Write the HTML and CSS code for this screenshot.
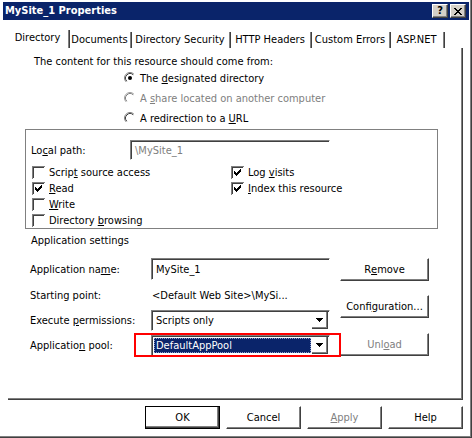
FILE: index.html
```html
<!DOCTYPE html>
<html>
<head>
<meta charset="utf-8">
<title>MySite_1 Properties</title>
<link rel="stylesheet" href="styles.css">
</head>
<body>
<div class="dialog">
  <div class="titlebar">
    <span class="title">MySite_1 Properties</span>
    <div class="capbtns">
      <span class="capbtn help">?</span>
      <span class="capbtn close">
        <svg width="8" height="7" viewBox="0 0 8 7" shape-rendering="crispEdges"><path d="M0 0h2v1H0zM6 0h2v1H6zM1 1h2v1H1zM5 1h2v1H5zM2 2h4v1H2zM3 3h2v1H3zM2 4h4v1H2zM1 5h2v1H1zM5 5h2v1H5zM0 6h2v1H0zM6 6h2v1H6z" fill="#000"/></svg>
      </span>
    </div>
  </div>

  <div class="tabs">
    <div class="tab sel t-dir">Directory</div>
    <div class="tab t-doc">Documents</div>
    <div class="tab t-sec">Directory Security</div>
    <div class="tab t-http">HTTP Headers</div>
    <div class="tab t-err">Custom Errors</div>
    <div class="tab t-asp">ASP.NET</div>
  </div>

  <div class="panel">
    <div class="intro">The content for this resource should come from:</div>

    <div class="radios">
      <div class="radio-row">
        <svg class="radio" width="12" height="12" viewBox="0 0 12 12"><circle cx="6" cy="6" r="5.5" fill="#fff"/><path d="M2.11 9.89A5.5 5.5 0 0 1 9.89 2.11" fill="none" stroke="#808080"/><path d="M2.82 9.18A4.5 4.5 0 0 1 9.18 2.82" fill="none" stroke="#404040"/><circle cx="6" cy="6" r="2" fill="#000"/></svg>
        <span>The <u>d</u>esignated directory</span>
      </div>
      <div class="radio-row disabled">
        <svg class="radio" width="12" height="12" viewBox="0 0 12 12"><circle cx="6" cy="6" r="5.5" fill="#fff"/><path d="M2.11 9.89A5.5 5.5 0 0 1 9.89 2.11" fill="none" stroke="#a0a0a0"/><path d="M2.82 9.18A4.5 4.5 0 0 1 9.18 2.82" fill="none" stroke="#808080"/></svg>
        <span>A <u>s</u>hare located on another computer</span>
      </div>
      <div class="radio-row">
        <svg class="radio" width="12" height="12" viewBox="0 0 12 12"><circle cx="6" cy="6" r="5.5" fill="#fff"/><path d="M2.11 9.89A5.5 5.5 0 0 1 9.89 2.11" fill="none" stroke="#808080"/><path d="M2.82 9.18A4.5 4.5 0 0 1 9.18 2.82" fill="none" stroke="#404040"/></svg>
        <span>A redirection to a <u>U</u>RL</span>
      </div>
    </div>

    <div class="group">
      <div class="path-row">
        <span class="path-label">Lo<u>c</u>al path:</span>
        <div class="edit edit-path disabled-text">\MySite_1</div>
      </div>
      <div class="checks">
        <div class="check-row">
          <svg class="cb" width="13" height="13" viewBox="0 0 13 13" shape-rendering="crispEdges"><rect width="13" height="13" fill="#fff"/><path d="M0 0h13v1H0zM0 0h1v13H0z" fill="#808080"/><path d="M1 1h11v1H1zM1 1h1v11H1z" fill="#404040"/></svg>
          <span>Scrip<u>t</u> source access</span>
        </div>
        <div class="check-row">
          <svg class="cb" width="13" height="13" viewBox="0 0 13 13" shape-rendering="crispEdges"><rect width="13" height="13" fill="#fff"/><path d="M0 0h13v1H0zM0 0h1v13H0z" fill="#808080"/><path d="M1 1h11v1H1zM1 1h1v11H1z" fill="#404040"/><path d="M3 5h1v3H3zM4 6h1v3H4zM5 7h1v3H5zM6 6h1v3H6zM7 5h1v3H7zM8 4h1v3H8zM9 3h1v3H9z" fill="#000"/></svg>
          <span>Log <u>v</u>isits</span>
        </div>
        <div class="check-row">
          <svg class="cb" width="13" height="13" viewBox="0 0 13 13" shape-rendering="crispEdges"><rect width="13" height="13" fill="#fff"/><path d="M0 0h13v1H0zM0 0h1v13H0z" fill="#808080"/><path d="M1 1h11v1H1zM1 1h1v11H1z" fill="#404040"/><path d="M3 5h1v3H3zM4 6h1v3H4zM5 7h1v3H5zM6 6h1v3H6zM7 5h1v3H7zM8 4h1v3H8zM9 3h1v3H9z" fill="#000"/></svg>
          <span><u>R</u>ead</span>
        </div>
        <div class="check-row">
          <svg class="cb" width="13" height="13" viewBox="0 0 13 13" shape-rendering="crispEdges"><rect width="13" height="13" fill="#fff"/><path d="M0 0h13v1H0zM0 0h1v13H0z" fill="#808080"/><path d="M1 1h11v1H1zM1 1h1v11H1z" fill="#404040"/><path d="M3 5h1v3H3zM4 6h1v3H4zM5 7h1v3H5zM6 6h1v3H6zM7 5h1v3H7zM8 4h1v3H8zM9 3h1v3H9z" fill="#000"/></svg>
          <span><u>I</u>ndex this resource</span>
        </div>
        <div class="check-row">
          <svg class="cb" width="13" height="13" viewBox="0 0 13 13" shape-rendering="crispEdges"><rect width="13" height="13" fill="#fff"/><path d="M0 0h13v1H0zM0 0h1v13H0z" fill="#808080"/><path d="M1 1h11v1H1zM1 1h1v11H1z" fill="#404040"/></svg>
          <span><u>W</u>rite</span>
        </div>
        <div class="check-row empty"></div>
        <div class="check-row">
          <svg class="cb" width="13" height="13" viewBox="0 0 13 13" shape-rendering="crispEdges"><rect width="13" height="13" fill="#fff"/><path d="M0 0h13v1H0zM0 0h1v13H0z" fill="#808080"/><path d="M1 1h11v1H1zM1 1h1v11H1z" fill="#404040"/></svg>
          <span>Directory <u>b</u>rowsing</span>
        </div>
      </div>
    </div>

    <div class="section-title">Application settings</div>

    <div class="settings">
      <div class="settings-grid">
        <span class="lbl">Application na<u>m</u>e:</span>
        <div class="edit edit-name">MySite_1</div>

        <span class="lbl">Starting point:</span>
        <span class="value">&lt;Default Web Site&gt;\MySi...</span>

        <span class="lbl">Execute <u>p</u>ermissions:</span>
        <div class="combo">
          <span class="combo-text">Scripts only</span>
          <span class="combo-btn"><svg width="7" height="4" viewBox="0 0 7 4" shape-rendering="crispEdges"><path d="M0 0h7v1H0zM1 1h5v1H1zM2 2h3v1H2zM3 3h1v1H3z" fill="#000"/></svg></span>
        </div>

        <span class="lbl lbl-pool">Applicatio<u>n</u> pool:</span>
        <div class="combo combo-pool">
          <span class="combo-text selected">DefaultAppPool</span>
          <span class="combo-btn"><svg width="7" height="4" viewBox="0 0 7 4" shape-rendering="crispEdges"><path d="M0 0h7v1H0zM1 1h5v1H1zM2 2h3v1H2zM3 3h1v1H3z" fill="#000"/></svg></span>
          <span class="highlight-box"></span>
        </div>
      </div>
      <div class="settings-buttons">
        <div class="btn wide">R<u>e</u>move</div>
        <div class="btn wide btn-config">Confi<u>g</u>uration...</div>
        <div class="btn wide btn-unload disabled-text">Unl<u>o</u>ad</div>
      </div>
    </div>
  </div>

  <div class="footer">
    <div class="btn default">OK</div>
    <div class="btn">Cancel</div>
    <div class="btn disabled-text"><u>A</u>pply</div>
    <div class="btn">Help</div>
  </div>
</div>
</body>
</html>
```

FILE: styles.css
```css
* {
  box-sizing: border-box;
}

html,
body {
  margin: 0;
  padding: 0;
  background: #fff;
}

body {
  font-family: "DejaVu Sans Condensed", "DejaVu Sans", sans-serif;
  font-stretch: condensed;
  font-size: 11px;
  color: #000;
}

u {
  text-decoration: underline;
  text-underline-offset: 1px;
}

.dialog {
  width: 472px;
  height: 438px;
  padding-top: 2px;
  background: #fff;
  box-shadow: inset -1px -1px #404040, inset -2px -2px #808080;
  overflow: hidden;
}

/* Title bar */
.titlebar {
  height: 18px;
  margin: 0 3px;
  background: #0a246a;
  display: flex;
  align-items: flex-start;
  justify-content: space-between;
}

.title {
  color: #fff;
  font-weight: bold;
  line-height: 18px;
  padding-left: 2px;
}

.capbtns {
  display: flex;
  gap: 2px;
  margin-top: 2px;
  margin-right: 3px;
}

.capbtn {
  width: 16px;
  height: 14px;
  background: #d4d0c8;
  border: 1px solid;
  border-color: #fff #404040 #404040 #fff;
  box-shadow: inset -1px -1px #808080;
  display: flex;
  align-items: center;
  justify-content: center;
  font-weight: bold;
  font-size: 11px;
  line-height: 12px;
}

/* Tabs */
.tabs {
  display: flex;
  align-items: flex-end;
  height: 18px;
  margin: 10px 0 0 8px;
}

.tab {
  height: 16px;
  line-height: 16px;
  text-align: center;
  border-right: 1px solid #404040;
  box-shadow: inset -1px 0 #808080;
  padding-right: 2px;
  white-space: nowrap;
}

.tab.sel {
  height: 18px;
}

.t-dir { width: 62px; }
.t-doc { width: 62px; }
.t-sec { width: 99px; }
.t-http { width: 81px; }
.t-err { width: 79px; }
.t-asp { width: 54px; }

/* Panel */
.panel {
  margin-left: 8px;
  width: 455px;
  height: 352px;
  border-right: 1px solid #404040;
  border-bottom: 1px solid #404040;
  box-shadow: inset -1px -1px #808080;
  padding-top: 7px;
}

.intro {
  margin-left: 26px;
  line-height: 13px;
}

.radios {
  margin-left: 116px;
}

.radio-row {
  height: 20px;
  display: flex;
  align-items: center;
  gap: 4px;
  white-space: nowrap;
}

.radio {
  flex: none;
}

.disabled,
.disabled-text {
  color: #808080;
}

/* Group box */
.group {
  margin: 1px 0 0 17px;
  width: 413px;
  height: 100px;
  border: 1px solid #808080;
  box-shadow: 1px 1px #fff;
  padding-top: 10px;
}

.path-row {
  display: flex;
  align-items: center;
  height: 20px;
  padding-left: 5px;
}

.path-label {
  width: 99px;
}

.edit {
  border: 1px solid;
  border-color: #808080 #fff #fff #808080;
  box-shadow: inset 1px 1px #404040;
  padding-left: 4px;
  display: flex;
  align-items: center;
  white-space: nowrap;
}

.edit-path {
  width: 200px;
  height: 20px;
}

.checks {
  margin-top: 4px;
  padding-left: 6px;
  display: grid;
  grid-template-columns: 199px auto;
  grid-auto-rows: 16px;
}

.check-row {
  display: flex;
  align-items: center;
  gap: 4px;
  white-space: nowrap;
}

.cb {
  flex: none;
}

.section-title {
  margin: 5px 0 0 23px;
  line-height: 14px;
}

/* Application settings */
.settings {
  margin: 10px 0 0 22px;
  display: flex;
  align-items: flex-start;
}

.settings-grid {
  display: grid;
  grid-template-columns: 121px 179px;
  grid-template-rows: 22px 30px 21px 21px;
  row-gap: 0;
  align-items: center;
}

.lbl {
  white-space: nowrap;
}

.lbl-pool,
.combo-pool {
  margin-top: 8px;
}

.edit-name {
  height: 22px;
  width: 179px;
}

.value {
  padding-left: 1px;
  white-space: nowrap;
}

.combo {
  position: relative;
  height: 21px;
  width: 179px;
  border: 1px solid;
  border-color: #808080 #fff #fff #808080;
  box-shadow: inset 1px 1px #404040;
  display: flex;
  align-items: stretch;
  padding: 1px 1px 1px 1px;
  padding-left: 2px;
}

.combo-text {
  flex: 1;
  display: flex;
  align-items: center;
  padding-left: 2px;
  white-space: nowrap;
}

.combo-text.selected {
  background: #0a246a;
  color: #fff;
  margin: 1px 1px 1px 0;
  outline: 1px dotted #8f9fd0;
  outline-offset: -1px;
}

.combo-btn {
  width: 16px;
  flex: none;
  border-right: 1px solid #404040;
  border-bottom: 1px solid #404040;
  box-shadow: inset -1px -1px #808080;
  display: flex;
  align-items: center;
  justify-content: center;
  padding-right: 1px;
}

.highlight-box {
  position: absolute;
  left: -18px;
  top: -3px;
  width: 207px;
  height: 24px;
  border: 2px solid #f00;
  pointer-events: none;
}

.settings-buttons {
  margin-left: 10px;
  display: flex;
  flex-direction: column;
}

.btn {
  width: 75px;
  height: 23px;
  background: #fff;
  border: 1px solid;
  border-color: #fff #404040 #404040 #fff;
  box-shadow: inset -1px -1px #808080;
  display: flex;
  align-items: center;
  justify-content: center;
  white-space: nowrap;
}

.btn.wide {
  width: 89px;
}

.btn-config {
  margin-top: 14px;
}

.btn-unload {
  margin-top: 15px;
}

.btn.default {
  border-color: #000;
  box-shadow: inset -1px -1px #404040, inset -2px -2px #808080;
}

/* Footer */
.footer {
  display: flex;
  gap: 6px;
  margin: 6px 0 0 145px;
}
```
